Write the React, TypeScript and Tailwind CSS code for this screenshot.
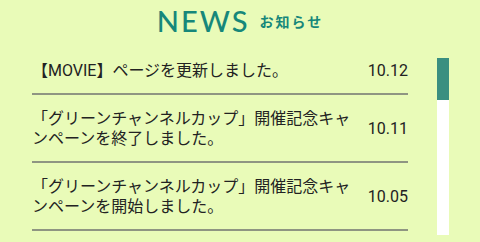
const news = [
  { title: "【MOVIE】ページを更新しました。", date: "10.12" },
  { title: "「グリーンチャンネルカップ」開催記念キャンペーンを終了しました。", date: "10.11" },
  { title: "「グリーンチャンネルカップ」開催記念キャンペーンを開始しました。", date: "10.05" },
]

export default function App() {
  return (
    <div className="h-[242px] w-[480px] overflow-hidden bg-[#e9fbb8] font-['Roboto','Noto_Sans_CJK_JP',sans-serif]">
      {/* heading */}
      <div className="flex items-center justify-center gap-[10px] pt-[6px]">
        <h2 className="font-['Lato',sans-serif] text-[29px] leading-[30px] font-medium tracking-[2px] text-[#16877a]">
          NEWS
        </h2>
        <span className="font-['Noto_Sans_CJK_JP',sans-serif] text-[14px] font-bold tracking-[2px] text-[#16877a]">
          お知らせ
        </span>
      </div>

      {/* list + scrollbar */}
      <div className="mt-[11px] flex">
        <ul className="ml-[32px] w-[376px]">
          {news.map((item) => (
            <li
              key={item.date}
              className="flex items-center justify-between border-b-2 border-[#8f9582] pt-[14px] pb-[12px]"
            >
              <p className="w-[325px] text-[16px] leading-[20px] text-[#222]">{item.title}</p>
              <span className="text-[16px] leading-[20px] text-[#222]">{item.date}</span>
            </li>
          ))}
        </ul>
        <div className="ml-[29px] mt-[11px] flex h-[177px] w-[12px] flex-col bg-white">
          <div className="h-[42px] bg-[#3a8f80]" />
        </div>
      </div>
    </div>
  )
}
